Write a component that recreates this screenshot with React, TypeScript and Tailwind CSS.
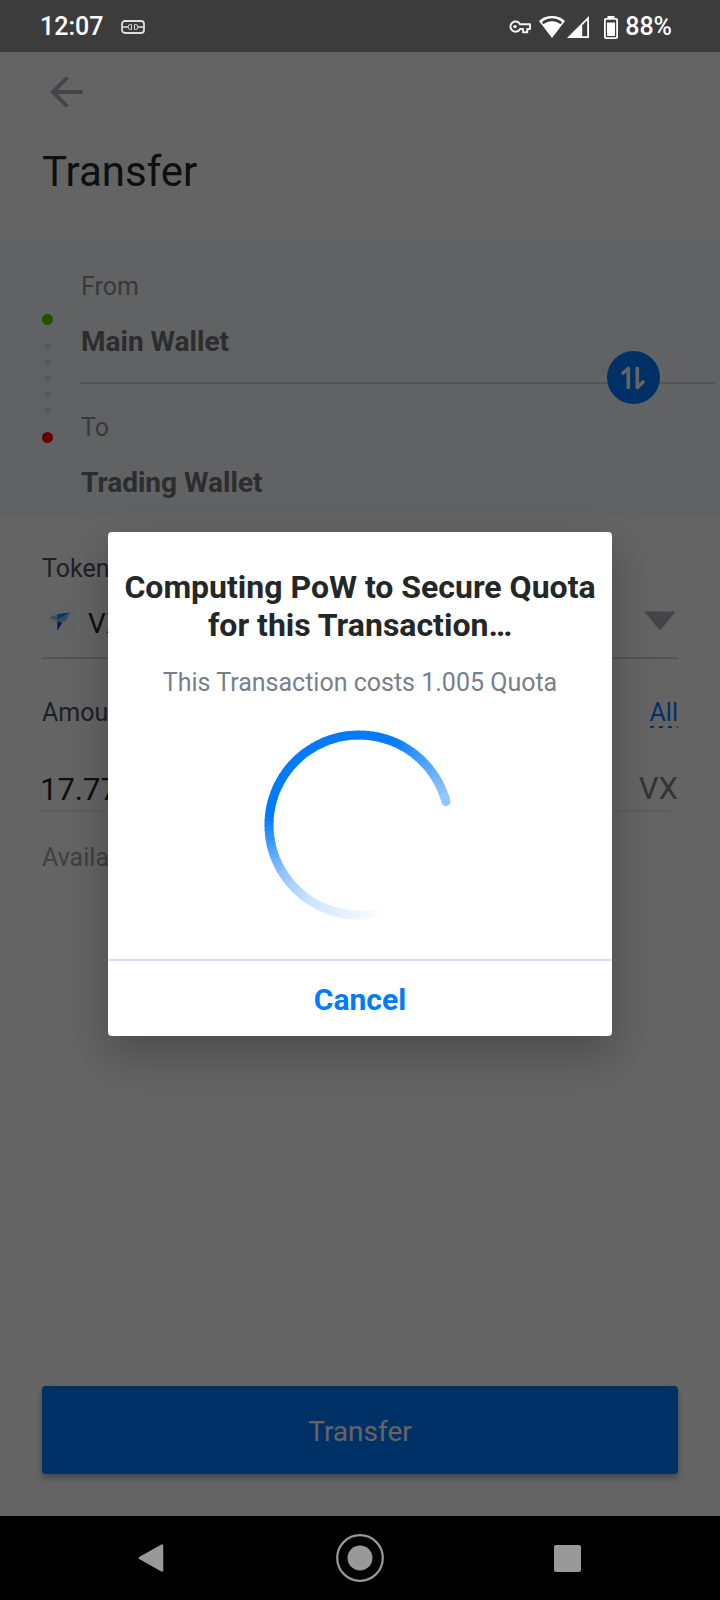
import { useState } from "react";

type Stop = [angle: number, strength: number];

// Angles in degrees, clockwise from twelve o'clock.
const STOPS: Stop[] = [
  [-196, 0],
  [-180, 0.06],
  [-150, 0.18],
  [-135, 0.3],
  [-120, 0.46],
  [-105, 0.7],
  [-83, 1],
  [22, 1],
  [45, 0.72],
  [60, 0.54],
  [76, 0.4],
];

function strengthAt(angle: number): number {
  for (let i = 1; i < STOPS.length; i++) {
    const [a0, s0] = STOPS[i - 1];
    const [a1, s1] = STOPS[i];
    if (angle <= a1) return s0 + ((s1 - s0) * (angle - a0)) / (a1 - a0);
  }
  return STOPS[STOPS.length - 1][1];
}

function tint(strength: number): string {
  const r = Math.round(255 * (1 - strength));
  const g = Math.round(255 - (255 - 122) * strength);
  return `rgb(${r}, ${g}, 255)`;
}

function point(angle: number): string {
  const rad = (angle * Math.PI) / 180;
  return `${(95 + 90 * Math.sin(rad)).toFixed(2)} ${(96 - 90 * Math.cos(rad)).toFixed(2)}`;
}

function Spinner() {
  const step = 3;
  const segments = [];
  for (let a = -195; a < 75; a += step) {
    const end = a + step;
    segments.push(
      <path
        key={a}
        d={`M${point(a - 0.6)} A90 90 0 0 1 ${point(end)}`}
        stroke={tint(strengthAt((a + end) / 2))}
        strokeLinecap={end >= 75 ? "round" : "butt"}
      />,
    );
  }
  return (
    <svg className="size-48" viewBox="0 0 192 192" fill="none" strokeWidth="9" role="img" aria-label="Computing">
      {segments}
    </svg>
  );
}

function StatusBar() {
  return (
    <header className="flex h-[52px] shrink-0 items-center justify-between bg-[#3c3c3c] pt-0.5 pr-12 pl-10 text-[25px] font-medium text-white">
      <div className="flex items-center gap-[18px]">
        <span>12:07</span>
        <svg className="h-3.5 w-6" viewBox="0 0 24 14" fill="none" stroke="#dedede" aria-hidden="true">
          <rect x="1" y="1" width="22" height="12" rx="3" strokeWidth="1.8" />
          <path d="M1 7h6M17 7h6" strokeWidth="1.6" />
          <path d="M10.500 4.500H9.500A2.500 2.500 0 0 0 9.500 9.500H10.500ZM13.500 4.500H14.500A2.500 2.500 0 0 1 14.500 9.500H13.500Z" strokeWidth="1" />
        </svg>
      </div>
      <div className="flex items-center">
        <svg className="mr-2 h-3.5 w-[22px]" viewBox="0 0 22 14" fill="none" stroke="#f2f2f2" strokeWidth="2" aria-hidden="true">
          <path d="M11 4.200A5.100 5.100 0 1 0 11 9h3v3.200h4.300V9H21V4.200Z" strokeLinejoin="round" />
          <circle cx="6" cy="6.600" r="1.700" fill="#f2f2f2" stroke="none" />
        </svg>
        <svg className="mr-0.5 h-[22px] w-[26px]" viewBox="0 0 26 22" aria-hidden="true">
          <path d="M13 0C8 0 3.600 1.800 0 5l13 17L26 5C22.400 1.800 18 0 13 0Z" fill="#fff" />
          <path d="M2.800 6.200C5.600 3.600 9.200 2.300 13 2.300s7.400 1.300 10.200 3.900L21.500 8.300C19 6.300 16.100 5.200 13 5.200S7 6.300 4.500 8.300Z" fill="#3c3c3c" />
        </svg>
        <svg className="mr-[15px] h-[22px] w-[22px]" viewBox="0 0 22 22" aria-hidden="true">
          <path d="M22 0V22H0Z" fill="#fff" />
          <path d="M15.200 9.200L20.200 4.300V20.200H15.200Z" fill="#3c3c3c" />
        </svg>
        <svg className="mr-[7px] h-[23px] w-3.5" viewBox="0 0 14 23" fill="none" aria-hidden="true">
          <rect x="3.500" y="0" width="7" height="3" fill="#fff" />
          <rect x="0.900" y="2.900" width="12.200" height="19.200" rx="1.200" stroke="#fff" strokeWidth="1.800" />
          <rect x="3" y="6.500" width="8" height="13.500" fill="#fff" />
        </svg>
        <span>88%</span>
      </div>
    </header>
  );
}

function SystemNav() {
  return (
    <nav className="flex h-[84px] shrink-0 items-center justify-between bg-black px-[18%] text-[#999]" aria-label="System">
      <button type="button" aria-label="Back" className="size-12">
        <svg viewBox="0 0 48 48" aria-hidden="true">
          <path d="M32 11.500V36.500L9.800 24Z" fill="currentColor" stroke="currentColor" strokeWidth="2.500" strokeLinejoin="round" />
        </svg>
      </button>
      <button type="button" aria-label="Home" className="size-12">
        <svg viewBox="0 0 48 48" aria-hidden="true">
          <circle cx="24" cy="24" r="22.800" fill="none" stroke="currentColor" strokeWidth="2.200" />
          <circle cx="24" cy="24" r="12.500" fill="currentColor" />
        </svg>
      </button>
      <button type="button" aria-label="Recent apps" className="size-12">
        <svg viewBox="0 0 48 48" aria-hidden="true">
          <rect x="12" y="11" width="27" height="27" rx="2" fill="currentColor" />
        </svg>
      </button>
    </nav>
  );
}

function RouteRail() {
  return (
    <div className="flex w-[11px] flex-col items-center pt-[43px]" aria-hidden="true">
      <span className="size-[11px] rounded-full bg-[#5bc500]" />
      <div className="my-[18px] flex flex-col gap-[9px]">
        {[0, 1, 2, 3, 4].map((n) => (
          <span key={n} className="size-[7px] rounded-full bg-[#dfe1e4]" />
        ))}
      </div>
      <span className="size-[11px] rounded-full bg-[#ff0008]" />
    </div>
  );
}

export default function App() {
  const [amount, setAmount] = useState("17.77");
  const [token, setToken] = useState("VX");

  return (
    <div className="flex min-h-screen flex-col bg-[#fafafa] font-['Roboto',sans-serif] text-[25px] leading-8">
      <StatusBar />
      <main className="relative flex grow flex-col">
        <div className="px-[42px] pt-4 pb-11">
          <button type="button" aria-label="Go back" className="block size-12 text-[#a9adb4]">
            <svg viewBox="0 0 24 24" fill="currentColor" aria-hidden="true">
              <path d="M20.300 11H7.830l5.590-5.590L12 4l-8 8 8 8 1.410-1.410L7.830 13H20.300v-2z" />
            </svg>
          </button>
          <h1 className="mt-8 text-[42px] leading-12 text-[#24272b]">Transfer</h1>
        </div>

        <section className="flex gap-7 bg-[#f2f4f7] pt-[31px] pr-1 pb-[18px] pl-[42px]">
          <RouteRail />
          <div className="grow">
            <p className="text-[#8d9096]">From</p>
            <p className="mt-[23px] text-[28px] font-bold text-[#6f7073]">Main Wallet</p>
            <div className="relative mt-6 border-b-2 border-[#ccd6e0]">
              <button
                type="button"
                aria-label="Swap wallets"
                className="absolute -top-[31px] right-14 size-[53px] rounded-full bg-[#007aff]"
              >
                <svg viewBox="0 0 53 53" fill="none" stroke="#fafafa" strokeWidth="3.600" strokeLinecap="round" strokeLinejoin="round" aria-hidden="true">
                  <path d="M16 22L21.300 17.500V36.500" />
                  <path d="M30.300 17.500V36.500L36 31" />
                </svg>
              </button>
            </div>
            <p className="mt-7 text-[#8d9096]">To</p>
            <p className="mt-[23px] text-[28px] font-bold text-[#6f7073]">Trading Wallet</p>
          </div>
        </section>

        <form className="flex grow flex-col px-[42px] pt-9 pb-[42px]" onSubmit={(e) => e.preventDefault()}>
          <label htmlFor="token" className="text-[#4b5060]">
            Token
          </label>
          <div className="mt-[18px] flex h-14 border-b-2 border-[#ccd6e3]">
            <svg className="size-[34px] shrink-0" viewBox="0 0 34 34" aria-hidden="true">
              <circle cx="17" cy="17" r="17" fill="#f5f7fc" />
              <path d="M7 14.500L15.300 11.500V18.500Z" fill="#9ac4e4" />
              <path d="M15.300 11L28 9.500L15.300 17Z" fill="#1487f5" />
              <path d="M15.300 17L28 9.500L23.500 18.500L15.300 19Z" fill="#7dc0ee" />
              <path d="M15.300 18.500L20.300 19.500L15.300 28Z" fill="#1f33dd" />
            </svg>
            <select
              id="token"
              value={token}
              onChange={(e) => setToken(e.target.value)}
              className="mt-[5px] ml-3 h-8 grow appearance-none bg-transparent text-[28px] text-[#24272b]"
            >
              <option>VX</option>
            </select>
            <svg className="mt-2 mr-0.5 h-5 w-8 shrink-0" viewBox="0 0 32 20" aria-hidden="true">
              <path d="M2 1.200H30L16 18.500Z" fill="#a9adb4" stroke="#a9adb4" strokeWidth="1.600" strokeLinejoin="round" />
            </svg>
          </div>

          <div className="mt-[38px] flex items-start justify-between">
            <label htmlFor="amount" className="text-[#4b5060]">
              Amount
            </label>
            <button type="button" className="pt-[3px] leading-[26px] text-[#007aff]">
              All
              <span className="block h-0.5 bg-[repeating-linear-gradient(to_right,#007aff_0_4px,transparent_4px_9px)]" />
            </button>
          </div>
          <div className="mt-[39px] flex text-[31px] leading-10">
            <input
              id="amount"
              inputMode="decimal"
              value={amount}
              onChange={(e) => setAmount(e.target.value)}
              className="-ml-0.5 h-[42px] min-w-0 grow bg-transparent text-[#24272b]"
            />
            <span className="pt-px text-[#7d828b]">{token}</span>
          </div>
          <div className="mr-[7px] -ml-0.5 border-b-2 border-[#ebebeb]" />
          <p className="mt-[30px] text-[#9fa1a8]">Available</p>

          <button
            type="submit"
            className="mt-auto h-22 rounded-[4px] bg-[#007aff] pt-1 text-[28px] text-[#fafafa] shadow-[0_4px_6px_rgba(0,0,0,0.3)]"
          >
            Transfer
          </button>
        </form>

        <div className="absolute inset-0 flex items-center justify-center bg-black/60">
          <div
            role="dialog"
            aria-modal="true"
            aria-labelledby="dialog-title"
            className="flex w-[70%] flex-col items-center rounded-[4px] bg-white pt-9 text-center shadow-[0_18px_44px_rgba(0,0,0,0.25)]"
          >
            <h2 id="dialog-title" className="px-3 text-[32px] leading-[38px] font-bold text-[#242728]">
              Computing PoW to Secure Quota for this Transaction…
            </h2>
            <p className="mt-[23px] mb-[30px] text-[#77808a]">This Transaction costs 1.005 Quota</p>
            <Spinner />
            <button
              type="button"
              className="mt-[38px] h-[77px] w-full border-t-2 border-[#d3dff0] pt-0.5 text-[30px] font-bold text-[#007aff]"
            >
              Cancel
            </button>
          </div>
        </div>
      </main>
      <SystemNav />
    </div>
  );
}
